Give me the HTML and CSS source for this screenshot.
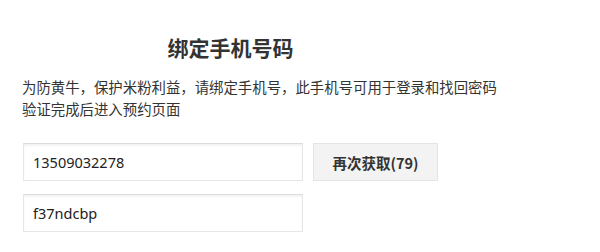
FILE: index.html
```html
<!DOCTYPE html>
<html lang="zh-CN">
<head>
<meta charset="utf-8">
<title>绑定手机号码</title>
<link rel="stylesheet" href="styles.css">
</head>
<body>
<div class="page">
  <h1 class="title">绑定手机号码</h1>
  <p class="desc">为防黄牛，保护米粉利益，请绑定手机号，此手机号可用于登录和找回密码验证完成后进入预约页面</p>
  <div class="row">
    <div class="field">13509032278</div>
    <button class="btn">再次获取(79)</button>
  </div>
  <div class="row">
    <div class="field">f37ndcbp</div>
  </div>
</div>
</body>
</html>
```

FILE: styles.css
```css
html, body {
  margin: 0;
  padding: 0;
  background: #fff;
}
body {
  font-family: "Noto Sans", "Noto Sans CJK SC", sans-serif;
  color: #333;
}
.page {
  display: flex;
  flex-direction: column;
  padding: 32px 0 0 23px;
  width: 490px;
}
.title {
  width: 415px;
  margin: 0;
  text-align: center;
  font-family: "Noto Sans CJK SC", sans-serif;
  font-size: 21px;
  line-height: 30px;
  font-weight: 700;
  color: #333;
}
.desc {
  margin: 14px 0 0 -1px;
  font-family: "Noto Sans CJK SC", sans-serif;
  font-size: 14.4px;
  line-height: 21.5px;
  color: #333;
  width: 480px;
}
.row {
  display: flex;
  gap: 10px;
  margin-top: 13px;
}
.row:first-of-type {
  margin-top: 24px;
}
.desc + .row {
  margin-top: 24px;
}
.field {
  box-sizing: border-box;
  width: 280px;
  height: 38px;
  border: 1px solid #e6e6e6;
  border-top-color: #dcdcdc;
  box-shadow: inset 0 2px 2px rgba(0,0,0,0.05);
  padding: 0 0 0 9px;
  display: flex;
  align-items: center;
  font-size: 14.5px;
  color: #222;
  background: #fff;
}
.btn {
  box-sizing: border-box;
  width: 125px;
  height: 38px;
  border: 1px solid #e4e4e4;
  background: #f3f3f3;
  font-family: "Noto Sans CJK SC", sans-serif;
  font-size: 14.5px;
  font-weight: 700;
  color: #333;
  padding: 0;
}
```
